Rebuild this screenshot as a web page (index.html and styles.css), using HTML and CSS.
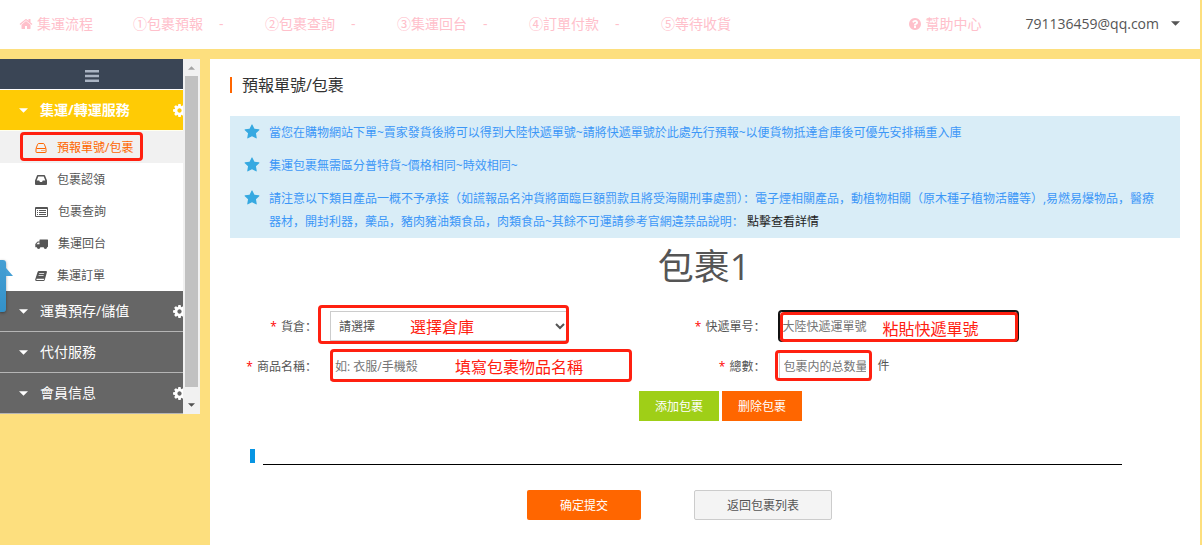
FILE: index.html
```html
<!DOCTYPE html>
<html lang="zh-CN">
<head>
<meta charset="utf-8">
<meta name="viewport" content="width=device-width, initial-scale=1">
<title>預報單號/包裹</title>
<link rel="stylesheet" href="styles.css">
</head>
<body>
<svg class="sprite" aria-hidden="true">
  <symbol id="i-home" viewBox="0 0 1792 1792"><path d="M1472 992v480q0 26-19 45t-45 19h-384v-384h-256v384h-384q-26 0-45-19t-19-45v-480q0-1 .5-3t.5-3l575-474 575 474q1 2 1 6zm223-69l-62 74q-8 9-21 11h-3q-13 0-21-7l-692-577-692 577q-12 8-24 7-13-2-21-11l-62-74q-8-10-7-23.5t11-21.5l719-599q32-26 76-26t76 26l244 204v-195q0-14 9-23t23-9h192q14 0 23 9t9 23v408l219 182q10 8 11 21.5t-7 23.5z"/></symbol>
  <symbol id="i-star" viewBox="0 0 1792 1792"><path d="M1728 647q0 22-26 48l-363 354 86 500q1 7 1 20 0 21-10.5 35.500t-30.500 14.500q-19 0-40-12l-449-236-449 236q-22 12-40 12-21 0-31.500-14.500t-10.500-35.500q0-6 2-20l86-500-364-354q-25-27-25-48 0-37 56-46l502-73 225-455q19-41 49-41t49 41l225 455 502 73q56 9 56 46z"/></symbol>
  <symbol id="i-help" viewBox="0 0 1792 1792"><path d="M1024 1376v-192q0-14-9-23t-23-9h-192q-14 0-23 9t-9 23v192q0 14 9 23t23 9h192q14 0 23-9t9-23zm256-672q0-88-55.5-163t-138.5-116-170-41q-243 0-371 213-15 24 8 42l132 100q7 6 19 6 16 0 25-12 53-68 86-92 34-24 86-24 48 0 85.500 26t37.500 59q0 38-20 61t-68 45q-63 28-115.500 86.500t-52.500 125.500v36q0 14 9 23t23 9h192q14 0 23-9t9-23q0-19 21.500-49.500t54.500-49.500q32-18 49-28.500t46-35 44.500-48 28-60.500 12.500-81zm384 192q0 209-103 385.500t-279.500 279.500-385.500 103-385.500-103-279.500-279.500-103-385.500 103-385.500 279.500-279.500 385.500-103 385.500 103 279.500 279.500 103 385.500z"/></symbol>
  <symbol id="i-cog" viewBox="0 0 1792 1792"><path d="M1152 896q0-106-75-181t-181-75-181 75-75 181 75 181 181 75 181-75 75-181zm512-109v222q0 12-8 23t-20 13l-185 28q-19 54-39 91 35 50 107 138 10 12 10 25t-9 23q-27 37-99 108t-94 71q-12 0-26-9l-138-108q-44 23-91 38-16 136-29 186-7 28-36 28h-222q-14 0-24.500-8.500t-11.500-21.500l-28-184q-49-16-90-37l-141 107q-10 9-25 9-14 0-25-11-126-114-165-168-7-10-7-23 0-12 8-23 15-21 51-66.500t54-70.500q-27-50-41-99l-183-27q-13-2-21-12.500t-8-23.500v-222q0-12 8-23t19-13l186-28q14-46 39-92-40-57-107-138-10-12-10-24 0-10 9-23 26-36 98.500-107.500t94.500-71.500q13 0 26 10l138 107q44-23 91-38 16-136 29-186 7-28 36-28h222q14 0 24.500 8.500t11.500 21.500l28 184q49 16 90 37l142-107q9-9 24-9 13 0 25 10 129 119 165 170 7 8 7 22 0 12-8 23-15 21-51 66.500t-54 70.500q26 50 41 98l183 28q13 2 21 12.500t8 23.500z"/></symbol>
  <symbol id="i-caret" viewBox="0 0 10 5"><path d="M0 0h10L5 5z"/></symbol>
  <symbol id="i-bars" viewBox="0 0 14 12"><path d="M0 0h14v2.400H0zM0 4.800h14v2.400H0zM0 9.600h14V12H0z"/></symbol>
  <symbol id="i-hdd" viewBox="0 0 12 12"><path fill="none" stroke="currentColor" d="M1 6.500 2.700 2.200q.2-.7 1-.7h4.600q.8 0 1 .7L11 6.500M1.500 6.500h9q.5 0 .5.500v3q0 .5-.5.500h-9q-.5 0-.5-.5V7q0-.5.500-.5z"/><path d="M6.500 8h1v1h-1zM8.500 8h1v1h-1z"/></symbol>
  <symbol id="i-inbox" viewBox="0 0 12 12"><path fill-rule="evenodd" d="M2.700 1h6.600q.5 0 .7.500L12 6.500V10q0 1-1 1H1q-1 0-1-1V6.500L2 1.500q.2-.5.700-.5zM3.300 2.500 1.700 6.600h2.500l.8 1.500h2l.8-1.500h2.500L8.700 2.500z"/></symbol>
  <symbol id="i-list" viewBox="0 0 13 12"><path fill-rule="evenodd" d="M1 1h11q1 0 1 1v8q0 1-1 1H1q-1 0-1-1V2q0-1 1-1zM1 3v7h11V3z"/><path d="M2 4h1v1H2zM4 4h7v1H4zM2 6h1v1H2zM4 6h7v1H4zM2 8h1v1H2zM4 8h7v1H4z"/></symbol>
  <symbol id="i-truck" viewBox="0 0 13 12"><path fill-rule="evenodd" d="M5 1.500h7.500q.5 0 .5.500v6.500q0 .8-.9.800a1.700 1.700 0 0 1-3.400 0H5.300a1.700 1.700 0 0 1-3.400 0H.8Q.3 9.300.3 8.800V5.900L2.300 3.700Q2.600 3.400 3 3.400h1.500V2q0-.5.500-.5zM1.400 6.300h3.100V4.400H3z"/></symbol>
  <symbol id="i-book" viewBox="0 0 12 12"><path fill-rule="evenodd" d="M4 1h7q1.200 0 .9 1.200L9.800 9.800Q9.500 11 8.500 11H1.600Q0 11 .2 9.500L2.500 2.300Q2.900 1 4 1zM4.300 3.200 4 4h5l.3-.8zM3.700 5.200 3.400 6h5l.3-.8zM1.500 9q-.3 1 .5 1h6.200q.6 0 .8-.6l.2-.6H1.600z"/></symbol>
</svg>

<header class="topbar">
  <nav class="steps">
    <a class="home" href="#"><svg class="icon"><use href="#i-home"/></svg>集運流程</a>
    <a href="#">①包裹預報<span class="dash">-</span></a>
    <a href="#">②包裹查詢<span class="dash">-</span></a>
    <a href="#">③集運回台<span class="dash">-</span></a>
    <a href="#">④訂單付款<span class="dash">-</span></a>
    <a href="#">⑤等待收貨</a>
  </nav>
  <a class="help" href="#"><svg class="icon"><use href="#i-help"/></svg>幫助中心</a>
  <button class="account" type="button">791136459@qq.com<svg class="caret"><use href="#i-caret"/></svg></button>
</header>

<div class="shell">
  <aside class="sidebar">
    <nav class="menu">
      <button class="menu-toggle" type="button" aria-label="收起選單"><svg class="bars"><use href="#i-bars"/></svg></button>
      <button class="group group-open" type="button"><svg class="caret"><use href="#i-caret"/></svg>集運/轉運服務<svg class="cog"><use href="#i-cog"/></svg></button>
      <a class="item item-active" href="#"><svg class="glyph"><use href="#i-hdd"/></svg>預報單號/包裹<span class="mark mark-menu"></span></a>
      <a class="item" href="#"><svg class="glyph"><use href="#i-inbox"/></svg>包裹認領</a>
      <a class="item" href="#"><svg class="glyph wide"><use href="#i-list"/></svg>包裹查詢</a>
      <a class="item" href="#"><svg class="glyph wide"><use href="#i-truck"/></svg>集運回台</a>
      <a class="item" href="#"><svg class="glyph"><use href="#i-book"/></svg>集運訂單</a>
      <button class="group" type="button"><svg class="caret"><use href="#i-caret"/></svg>運費預存/儲值<svg class="cog"><use href="#i-cog"/></svg></button>
      <button class="group" type="button"><svg class="caret"><use href="#i-caret"/></svg>代付服務</button>
      <button class="group" type="button"><svg class="caret"><use href="#i-caret"/></svg>會員信息<svg class="cog"><use href="#i-cog"/></svg></button>
    </nav>
    <div class="scroll" aria-hidden="true">
      <svg class="arrow arrow-up"><use href="#i-caret"/></svg>
      <div class="thumb"></div>
      <svg class="arrow"><use href="#i-caret"/></svg>
    </div>
    <div class="side-tab"></div>
  </aside>

  <main class="panel">
    <h1 class="title">預報單號/包裹</h1>

    <ul class="notice">
      <li><svg class="star"><use href="#i-star"/></svg><span>當您在購物網站下單~賣家發貨後將可以得到大陸快遞單號~請將快遞單號於此處先行預報~以便貨物抵達倉庫後可優先安排稱重入庫</span></li>
      <li><svg class="star"><use href="#i-star"/></svg><span>集運包裹無需區分普特貨~價格相同~時效相同~</span></li>
      <li><svg class="star"><use href="#i-star"/></svg><span>請注意以下類目產品一概不予承接（如謊報品名沖貨將面臨巨額罰款且將受海關刑事處罰）：電子煙相關產品，動植物相關（原木種子植物活體等）,易燃易爆物品，醫療器材，開封利器，藥品，豬肉豬油類食品，肉類食品~其餘不可運請參考官網違禁品說明： <a href="#">點擊查看詳情</a></span></li>
    </ul>

    <form>
      <h2 class="parcel">包裹1</h2>
      <div class="fields">
        <label for="depot"><i>*</i> 貨倉：</label>
        <div class="field">
          <select id="depot"><option>請選擇</option></select>
          <span class="mark mark-depot">選擇倉庫</span>
        </div>
        <label for="track"><i>*</i> 快遞單号：</label>
        <div class="field">
          <input id="track" class="focused" type="text" placeholder="大陸快遞運單號">
          <span class="mark mark-track">粘貼快遞單號</span>
        </div>
        <label for="goods"><i>*</i> 商品名稱：</label>
        <div class="field field-wide">
          <input id="goods" type="text" placeholder="如: 衣服/手機殼">
          <span class="mark mark-goods">填寫包裹物品名稱</span>
        </div>
        <label for="count"><i>*</i> 總數：</label>
        <div class="count">
          <div class="field field-small">
            <input id="count" type="text" placeholder="包裹内的总数量">
            <span class="mark mark-count"></span>
          </div>
          <span>件</span>
        </div>
      </div>
      <div class="edit">
        <button class="btn btn-add" type="button">添加包裹</button>
        <button class="btn btn-del" type="button">删除包裹</button>
      </div>
      <div class="rule"><span class="tick"></span><hr></div>
      <div class="submit">
        <button class="btn btn-submit" type="submit">确定提交</button>
        <button class="btn btn-back" type="button">返回包裹列表</button>
      </div>
    </form>
  </main>
</div>
</body>
</html>
```

FILE: styles.css
```css
* { box-sizing: border-box; }

body {
  margin: 0;
  padding-right: 2px;
  min-height: 100vh;
  display: flex;
  flex-direction: column;
  background: #fddf7e;
  color: #555;
  font: 12px/20px "Open Sans", "Noto Sans CJK SC", sans-serif;
}

a { color: inherit; text-decoration: none; }
button, input, select { font: inherit; color: inherit; margin: 0; }
button { border: 0; cursor: pointer; }
svg { fill: currentColor; flex: none; }
.sprite { position: absolute; width: 0; height: 0; }

/* top bar */
.topbar {
  display: flex;
  align-items: center;
  height: 49px;
  padding: 0 20px 2px 19px;
  background: #fff;
  color: #ffc0cb;
  font-size: 14px;
}
.steps { display: flex; flex: 1; }
.steps a { width: 132px; white-space: nowrap; }
.steps .home { width: 114px; }
.dash { margin-left: 16px; }
.icon { width: 14px; height: 14px; margin-right: 4px; vertical-align: -2px; }
.account {
  display: flex;
  align-items: center;
  gap: 12px;
  margin-left: 42px;
  padding: 0;
  background: none;
  color: #555;
}
.topbar .account { padding-left: 2px; }
.caret { width: 9px; height: 5px; }

/* side menu */
.shell { display: flex; flex: 1; gap: 10px; padding-top: 10px; }
.sidebar { position: relative; display: flex; align-self: flex-start; width: 200px; }
.menu { flex: 1; min-width: 0; overflow: hidden; background: #fff; }
.menu-toggle {
  display: grid;
  place-items: center;
  width: 100%;
  height: 30px;
  margin-bottom: 1px;
  padding: 4px 0 0;
  background: #3a4555;
  color: #aab4c3;
}
.bars { width: 14px; height: 12px; }
.group {
  position: relative;
  display: flex;
  align-items: center;
  gap: 12px;
  width: 100%;
  height: 41px;
  padding: 0 0 0 19px;
  border-bottom: 1px solid #b5b5b5;
  background: #666;
  color: #fff;
  font-size: 14px;
}
.group-open { background: #ffcb05; border-bottom-color: #ffe; font-weight: bold; }
.cog { position: absolute; right: -4px; width: 15px; height: 15px; }
.item {
  position: relative;
  display: flex;
  align-items: center;
  gap: 10px;
  height: 32px;
  padding: 2px 0 0 35px;
}
.item-active { background: #f1f1f1; color: #f60; }
.glyph { width: 12px; height: 12px; }
.wide { width: 13px; }
.scroll {
  display: flex;
  flex-direction: column;
  align-items: center;
  width: 17px;
  background: #f1f1f1;
  color: #505050;
}
.arrow { width: 7px; height: 4px; margin: 7px 0 6px; }
.arrow-up { color: #a3a3a3; transform: rotate(180deg); }
.thumb { width: 13px; height: 311px; background: #c1c1c1; }
.thumb + .arrow { margin-top: 16px; }
.side-tab {
  position: absolute;
  left: 0;
  top: 201px;
  width: 6px;
  height: 52px;
  border-radius: 0 3px 3px 0;
  background: linear-gradient(#459fd4, #3391c9);
  box-shadow: 0 1px 3px rgba(0, 0, 0, .4);
}
.side-tab::after {
  content: "";
  position: absolute;
  left: 6px;
  top: 8px;
  border-top: 8px solid transparent;
  border-left: 7px solid #459fd4;
}

/* main panel */
.panel { flex: 1; min-width: 0; padding: 18px 20px 20px; background: #fff; }
.title {
  margin: 0 0 23px;
  padding-left: 10px;
  border-left: 2px solid #f60;
  color: #333;
  font-size: 16px;
  font-weight: normal;
  line-height: 16px;
}
.notice {
  display: grid;
  gap: 10px;
  margin: 0;
  padding: 5px 18px 5px 14px;
  list-style: none;
  background: #d9edf7;
  color: #3c97f7;
  line-height: 23px;
}
.notice li { display: flex; gap: 9px; }
.notice a { color: #222; }
.star { width: 16px; height: 16px; margin-top: 3px; color: #36a9e1; }

/* form */
.parcel {
  margin: 4px 0 19px;
  padding-right: 2px;
  font-size: 36px;
  font-weight: normal;
  line-height: 50px;
  text-align: center;
}
.fields {
  display: grid;
  grid-template-columns: 90px 9fr 100px 11fr;
  gap: 10px;
  align-items: center;
}
.fields label { padding: 2px 3px 0 0; text-align: right; white-space: nowrap; }
.fields i { margin-right: 1px; color: #f00; font-style: normal; }
.field { position: relative; width: 239px; height: 30px; }
.field-wide { width: 301px; }
.field-small { width: 92px; }
.field input, .field select {
  display: block;
  width: 100%;
  height: 100%;
  padding: 0 4px;
  border: 1px solid #ccc;
  border-radius: 0;
  background: #fff;
  outline: 0;
}
.field .focused { border-color: #111; border-radius: 3px; padding: 0 3px; box-shadow: 0 0 0 1px #111; }
.field input::placeholder { color: #757575; opacity: 1; }
.count { display: flex; align-items: center; gap: 7px; }

/* red callouts over the controls */
.mark {
  position: absolute;
  border: 3px solid #ff2010;
  border-radius: 4px;
  color: #ff2010;
  font-size: 16px;
  line-height: 28px;
  pointer-events: none;
}
.mark-menu { left: 20px; top: 1px; width: 123px; height: 29px; }
.mark-depot { inset: -6px 0 -3px -12px; padding: 5px 0 0 89px; }
.mark-track { inset: 1px 0 -1px 1px; padding-left: 100px; }
.mark-goods { inset: -2px -1px -1px 0; padding: 1px 0 0 122px; }
.mark-count { inset: -1px -1px 0 -4px; }

.edit { display: flex; justify-content: center; gap: 3px; margin-top: 10px; padding-left: 31px; }
.btn { height: 30px; padding: 2px 16px 0; color: #fff; }
.btn-add { background: #9fcf17; }
.btn-del { background: #f60; }
.rule { display: flex; gap: 8px; margin: 28px 58px 27px 20px; }
.tick { width: 5px; height: 14px; background: #0795e3; }
.rule hr { flex: 1; align-self: flex-end; height: 1px; margin: 0 0 -2px; border: 0; background: #000; }
.submit { display: flex; justify-content: center; gap: 53px; padding-right: 51px; }
.btn-submit { padding: 2px 33px 0; border-radius: 2px; background: #f60; }
.btn-back { padding: 2px 32px 0; border: 1px solid #ccc; border-radius: 2px; background: #f4f4f4; color: #555; }
```
